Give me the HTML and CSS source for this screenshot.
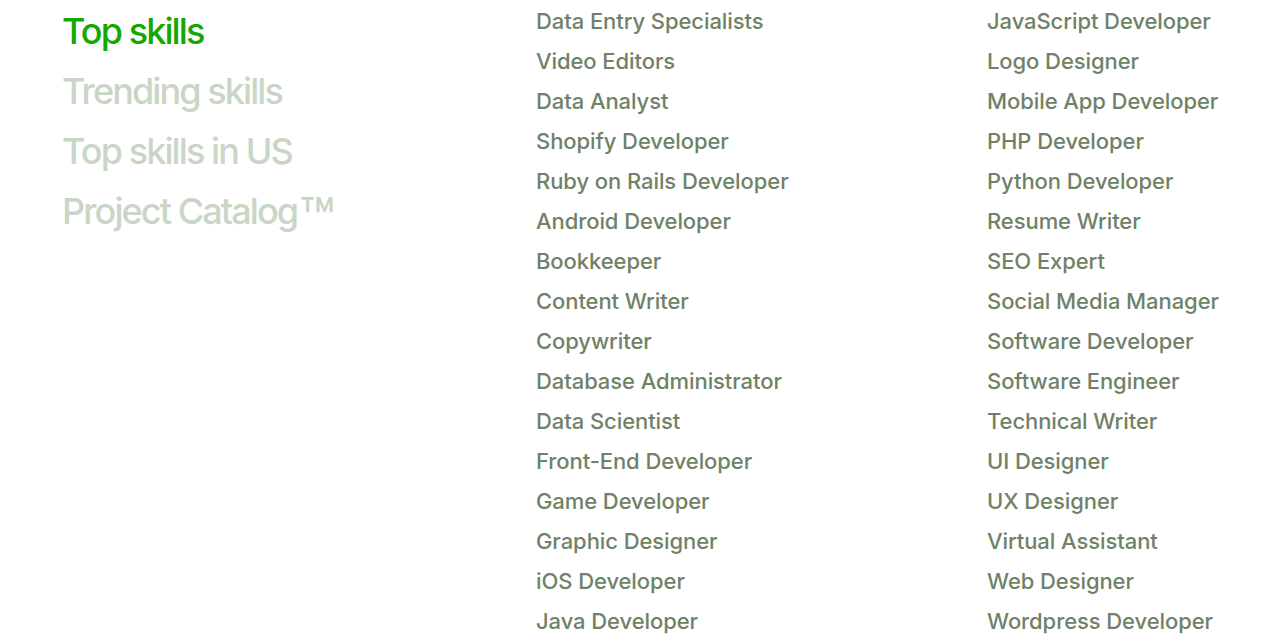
FILE: index.html
```html
<!DOCTYPE html>
<html lang="en">
<head>
<meta charset="utf-8">
<title>Top skills</title>
<link rel="stylesheet" href="styles.css">
</head>
<body>
<section class="skills">
  <nav class="tabs">
    <a class="tab active" href="#">Top skills</a>
    <a class="tab" href="#">Trending skills</a>
    <a class="tab" href="#">Top skills in US</a>
    <a class="tab" href="#">Project Catalog<span class="tm">™</span></a>
  </nav>
  <ul class="list">
    <li>Data Entry Specialists</li>
    <li>Video Editors</li>
    <li>Data Analyst</li>
    <li>Shopify Developer</li>
    <li>Ruby on Rails Developer</li>
    <li>Android Developer</li>
    <li>Bookkeeper</li>
    <li>Content Writer</li>
    <li>Copywriter</li>
    <li>Database Administrator</li>
    <li>Data Scientist</li>
    <li>Front-End Developer</li>
    <li>Game Developer</li>
    <li>Graphic Designer</li>
    <li>iOS Developer</li>
    <li>Java Developer</li>
  </ul>
  <ul class="list">
    <li>JavaScript Developer</li>
    <li>Logo Designer</li>
    <li>Mobile App Developer</li>
    <li>PHP Developer</li>
    <li>Python Developer</li>
    <li>Resume Writer</li>
    <li>SEO Expert</li>
    <li>Social Media Manager</li>
    <li>Software Developer</li>
    <li>Software Engineer</li>
    <li>Technical Writer</li>
    <li>UI Designer</li>
    <li>UX Designer</li>
    <li>Virtual Assistant</li>
    <li>Web Designer</li>
    <li>Wordpress Developer</li>
  </ul>
</section>
</body>
</html>
```
FILE: styles.css
```css
html, body {
  margin: 0;
  padding: 0;
  background: #ffffff;
}
body {
  font-family: "Inter", "Liberation Sans", Arial, sans-serif;
  overflow: hidden;
}
.skills {
  display: grid;
  grid-template-columns: 474px 451px 1fr;
  padding: 1px 0 0 62px;
}
.tabs {
  display: flex;
  flex-direction: column;
  align-items: flex-start;
}
.tab {
  font-size: 36px;
  font-weight: 500;
  line-height: 60px;
  letter-spacing: -1.9px;
  color: #c9d6c6;
  text-decoration: none;
}
.tab.active {
  color: #14a800;
}
.tm {
  font-size: 58px;
  line-height: 0;
  letter-spacing: 0;
  margin-left: 2px;
  vertical-align: -15px;
}
.list {
  list-style: none;
  margin: 0;
  padding: 0;
}
.list li {
  font-size: 22px;
  font-weight: 500;
  line-height: 40px;
  letter-spacing: -0.08px;
  color: #6f8267;
}
```
